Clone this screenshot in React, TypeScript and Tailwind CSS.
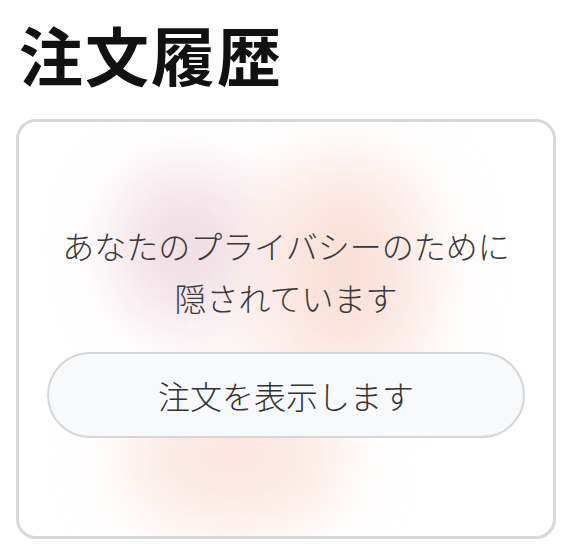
export default function App() {
  return (
    <div
      className="w-[578px] h-[553px] bg-white overflow-hidden"
      style={{ fontFamily: '"Noto Sans CJK JP", "Noto Sans", sans-serif' }}
    >
      <h1 className="pt-[21px] pl-[19px] text-[64px] leading-[64px] font-bold tracking-[2px] text-[#111111]">
        注文履歴
      </h1>
      <div className="relative ml-4 mt-[34px] h-[420px] w-[540px] overflow-hidden rounded-[20px] border-[3px] border-[#d6d8da] bg-white">
        <div className="pointer-events-none absolute inset-0">
          <div className="absolute left-[95px] top-[45px] h-[160px] w-[140px] rounded-full bg-[#e6c6d2] opacity-55 blur-[32px]" />
          <div className="absolute left-[245px] top-[40px] h-[220px] w-[160px] rounded-full bg-[#f6cdbf] opacity-60 blur-[38px]" />
          <div className="absolute left-[110px] top-[270px] h-[130px] w-[210px] rounded-full bg-[#f7d0c2] opacity-55 blur-[38px]" />
        </div>
        <div className="relative flex flex-col items-center pt-[97px] px-[28px]">
          <p className="text-center text-[32px] leading-[52px] font-light text-[#3a3a3a]">
            あなたのプライバシーのために
            <br />
            隠されています
          </p>
          <button className="mt-[29px] flex h-[86px] w-full items-center justify-center rounded-full border-2 border-[#d4d6d8] bg-[#f8f9fa] text-[32px] font-light text-[#333333]">
            注文を表示します
          </button>
        </div>
      </div>
    </div>
  );
}
